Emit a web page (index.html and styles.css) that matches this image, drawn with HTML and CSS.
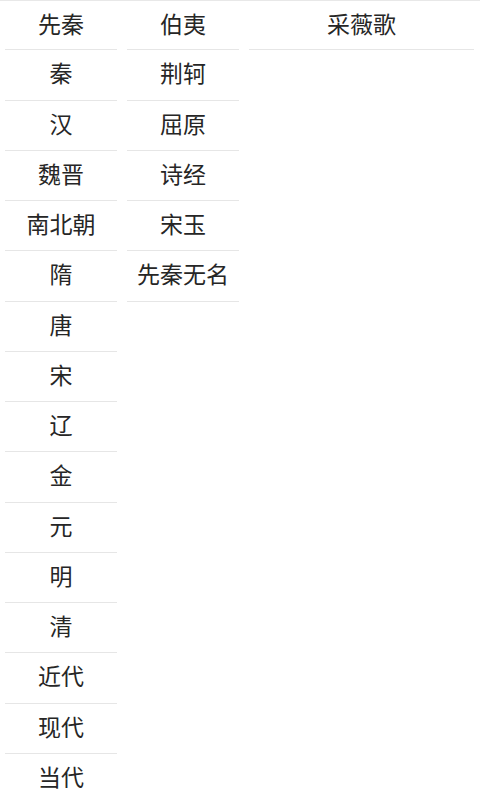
FILE: index.html
```html
<!DOCTYPE html>
<html lang="zh">
<head>
<meta charset="utf-8">
<link rel="stylesheet" href="styles.css">
</head>
<body>
<div class="page">
  <ul class="col col-dynasty">
    <li class="item">先秦</li>
    <li class="item">秦</li>
    <li class="item">汉</li>
    <li class="item">魏晋</li>
    <li class="item">南北朝</li>
    <li class="item">隋</li>
    <li class="item">唐</li>
    <li class="item">宋</li>
    <li class="item">辽</li>
    <li class="item">金</li>
    <li class="item">元</li>
    <li class="item">明</li>
    <li class="item">清</li>
    <li class="item">近代</li>
    <li class="item">现代</li>
    <li class="item">当代</li>
  </ul>
  <ul class="col col-author">
    <li class="item">伯夷</li>
    <li class="item">荆轲</li>
    <li class="item">屈原</li>
    <li class="item">诗经</li>
    <li class="item">宋玉</li>
    <li class="item">先秦无名</li>
  </ul>
  <ul class="col col-poem">
    <li class="item">采薇歌</li>
  </ul>
</div>
</body>
</html>
```

FILE: styles.css
```css
html, body {
  margin: 0;
  padding: 0;
  background: #ffffff;
}
body {
  font-family: "Noto Sans CJK SC", "Noto Sans", sans-serif;
  color: #262626;
  height: 800px;
  overflow: hidden;
}
.page {
  border-top: 1px solid #e8e8e8;
  display: grid;
  grid-template-columns: 112px 112px 225px;
  column-gap: 10px;
  padding: 0 6px 0 5px;
  align-items: start;
}
.col {
  list-style: none;
  margin: 0;
  padding: 0;
}
.item {
  box-sizing: border-box;
  height: 50.25px;
  padding-bottom: 4px;
  border-bottom: 1px solid #e6e6e6;
  display: flex;
  align-items: center;
  justify-content: center;
  font-size: 23px;
  line-height: 1;
}
.item:first-child {
  height: 49.25px;
}
```
